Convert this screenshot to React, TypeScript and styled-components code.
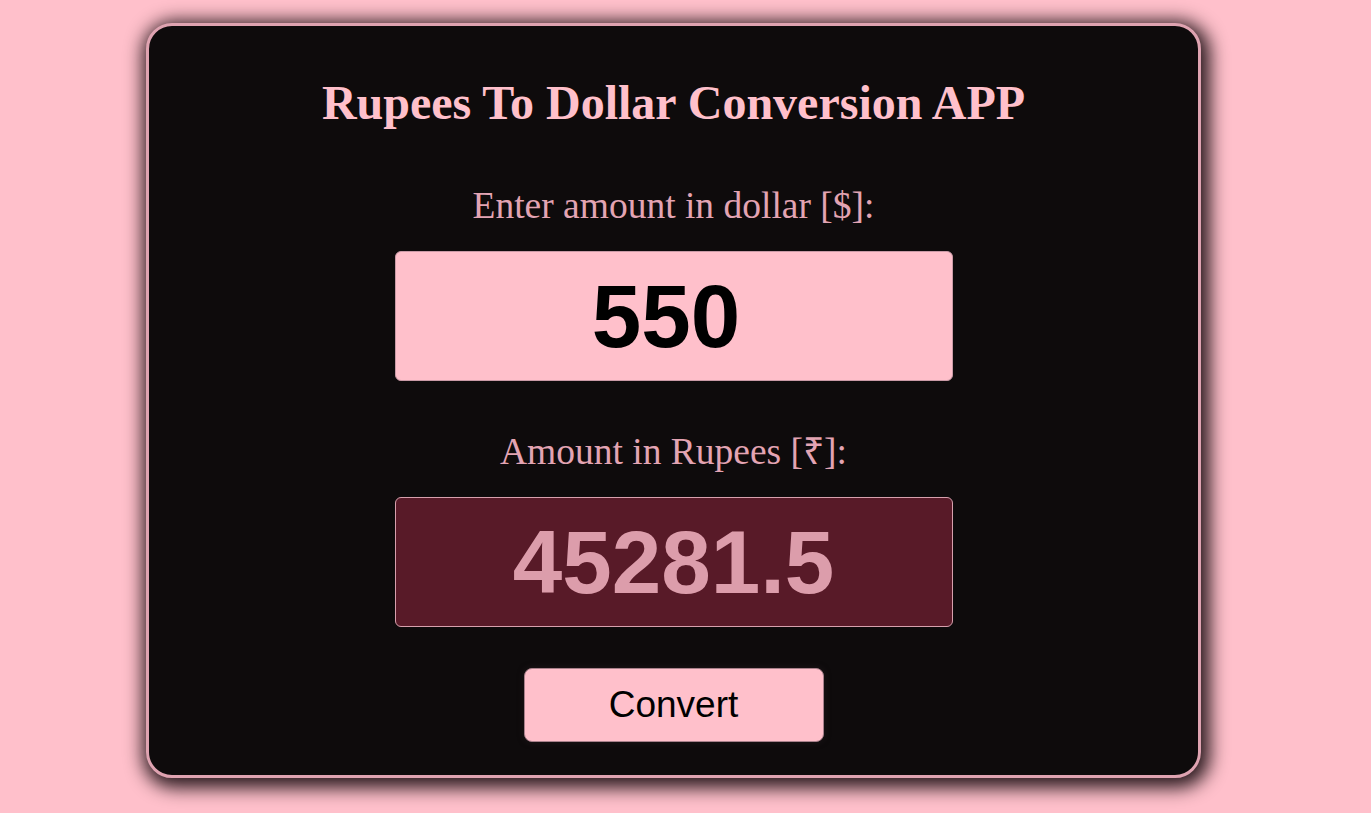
import React from "react";
import styled, { createGlobalStyle } from "styled-components";

const Global = createGlobalStyle`
  html, body { margin: 0; padding: 0; background: #ffc0cb; }
  body { font-family: "Liberation Serif", "Times New Roman", serif; }
  * { box-sizing: border-box; }
`;

const Page = styled.div`
  min-height: 813px;
  padding: 23px 0 0 146px;
`;

const Card = styled.div`
  width: 1055px;
  height: 755px;
  background: #0e0b0c;
  border: 3px solid #dfa3b1;
  border-radius: 26px;
  box-shadow: 3px 4px 18px 6px rgba(20, 8, 12, 0.9);
  display: flex;
  flex-direction: column;
  align-items: center;
  padding-top: 53px;
`;

const Title = styled.h1`
  margin: 0;
  font-family: "Liberation Serif", "Times New Roman", serif;
  font-weight: 700;
  font-size: 48px;
  line-height: 48px;
  color: #ffc0cb;
`;

const Label = styled.label<{ $top: number }>`
  margin-top: ${(p) => p.$top}px;
  font-family: "Liberation Serif", "Times New Roman", serif;
  font-size: 37.5px;
  line-height: 42px;
  color: #e3a4b3;
`;

const Field = styled.input<{ $dark?: boolean }>`
  margin-top: 24px;
  width: 558px;
  height: 130px;
  border-radius: 6px;
  border: 1px solid ${(p) => (p.$dark ? "#d7a0ad" : "#c99aa6")};
  background: ${(p) => (p.$dark ? "#581a28" : "#ffc0cb")};
  color: ${(p) => (p.$dark ? "#dc9dab" : "#000")};
  font-family: "Liberation Sans", Arial, sans-serif;
  font-weight: 700;
  font-size: 89px;
  text-align: center;
  outline: none;
  padding: 0;
  &:disabled { opacity: 1; -webkit-text-fill-color: #dc9dab; }
`;

const Button = styled.button`
  margin-top: 41px;
  width: 300px;
  height: 74px;
  background: #ffc0cb;
  border: 1px solid #a8808b;
  border-radius: 8px;
  font-family: "Liberation Sans", Arial, sans-serif;
  font-size: 37px;
  color: #000;
  box-shadow: 0 0 6px rgba(40, 30, 34, 0.6);
  cursor: pointer;
`;

export default function App() {
  return (
    <>
      <Global />
      <Page>
        <Card>
          <Title>Rupees To Dollar Conversion APP</Title>
          <Label $top={58}>Enter amount in dollar [$]:</Label>
          <Field type="number" defaultValue="550" />
          <Label $top={50}>Amount in Rupees [₹]:</Label>
          <Field $dark disabled value="45281.5" readOnly />
          <Button>Convert</Button>
        </Card>
      </Page>
    </>
  );
}
